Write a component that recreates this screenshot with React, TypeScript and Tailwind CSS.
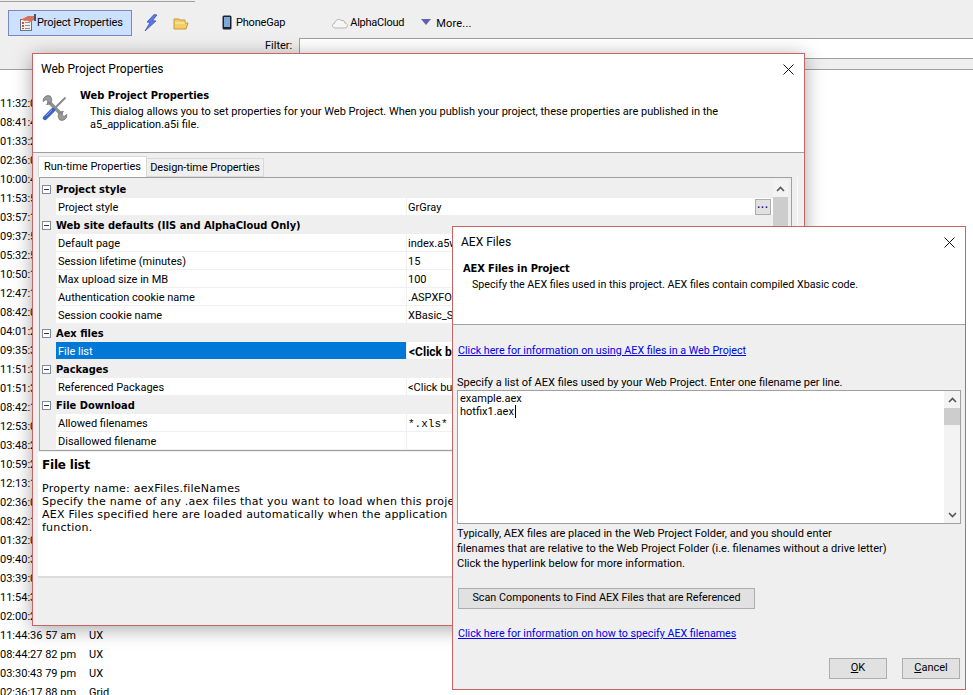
import React from "react";

const times = ["11:32:0","08:41:4","01:33:2","02:36:0","10:00:4","11:53:5","03:57:1","09:37:5","05:32:5","10:50:1","12:47:1","08:42:0","04:01:2","09:35:3","11:51:3","01:51:3","08:42:1","12:53:0","03:48:2","10:59:2","12:13:1","02:36:0","08:42:1","01:32:0","09:40:3","03:39:0","11:54:3","02:00:2"];
const tail: [string, string][] = [["11:44:36 57 am","UX"],["08:44:27 82 pm","UX"],["03:30:43 79 pm","UX"],["02:36:17 88 pm","Grid"]];

function Group({ label }: { label: string }) {
  return (
    <div className="flex h-[18px] items-center bg-[#efefef]">
      <div className="flex w-[16px] shrink-0 items-center pl-[2px]">
        <div className="relative h-[9px] w-[9px] border border-[#7f8a9c] bg-white">
          <div className="absolute left-[1px] top-[3px] h-px w-[5px] bg-[#334]" />
        </div>
      </div>
      <span className="pt-[2px] font-bold text-[11px] [font-family:'DejaVu_Sans',sans-serif] [font-stretch:condensed]">{label}</span>
    </div>
  );
}

function Row({ name, value, selected, mono, bold }: { name: string; value?: string; selected?: boolean; mono?: boolean; bold?: boolean }) {
  return (
    <div className="flex h-[18px] bg-[#efefef]">
      <div className="w-[16px] shrink-0" />
      <div className={`flex h-[17px] w-[350px] shrink-0 items-center pl-[2px] pt-[3px] ${selected ? "bg-[#0078d7] text-white" : "bg-white"}`}>{name}</div>
      <div className={`ml-px flex h-[17px] flex-1 items-center justify-between bg-white ${bold ? "pl-[2px] font-bold text-[12px]" : "pl-[1px]"} ${mono ? "[font-family:'Liberation_Mono',monospace]" : ""}`}>
        <span className="pt-[3px]">{value}</span>
        {value === "GrGray" && (
          <span className="mr-[2px] flex h-[16px] w-[16px] items-center justify-center border border-[#adadad] bg-[#e1e1e1] pb-[4px] text-[10px] font-bold leading-[8px] tracking-[1px] text-[#00008b]">...</span>
        )}
      </div>
    </div>
  );
}

function Close() {
  return (
    <svg width="11" height="11" viewBox="0 0 11 11" className="block">
      <path d="M0.5 0.5L10.5 10.5M10.5 0.5L0.5 10.5" stroke="#111" strokeWidth="1" />
    </svg>
  );
}

function Chevron({ down }: { down?: boolean }) {
  return (
    <svg width="9" height="6" viewBox="0 0 9 6" className="block">
      <path d={down ? "M1 1L4.5 4.5L8 1" : "M1 5L4.5 1.5L8 5"} fill="none" stroke="#555" strokeWidth="1.6" />
    </svg>
  );
}

function PropsIcon() {
  return (
    <svg width="18" height="18" viewBox="0 0 18 18" className="block">
      <rect x="1.5" y="5.5" width="11" height="11" fill="#f3eee6" stroke="#6b7383" />
      <rect x="3" y="8" width="2" height="2" fill="#c8553d" />
      <rect x="3" y="11" width="2" height="2" fill="#c8553d" />
      <rect x="3" y="14" width="2" height="1" fill="#6b7383" />
      <path d="M6 8.5H11M6 11.5H11M6 14.5H11" stroke="#8a93a3" />
      <path d="M3 5L9 2H15V6L11 8L8 6.5L6 7L3 6Z" fill="#d9705a" />
      <rect x="15" y="0" width="2" height="7" fill="#47536b" />
    </svg>
  );
}

function ToolsIcon() {
  return (
    <svg width="26" height="26" viewBox="0 0 26 26" className="block">
      <path d="M6 6L20 20" stroke="#8f8f8f" strokeWidth="3.6" />
      <path d="M8.5 1.2A5 5 0 0 0 1.2 6.5L4 4.5L6.5 7L4.6 9.6A5 5 0 0 0 9.8 4.5Z" fill="#9a9a9a" stroke="#666" strokeWidth="0.7" />
      <path d="M17.5 24.8A5 5 0 0 0 24.8 19.5L22 21.5L19.5 19L21.4 16.4A5 5 0 0 0 16.2 21.5Z" fill="#9a9a9a" stroke="#666" strokeWidth="0.7" />
      <path d="M12 14L23.5 2.5" stroke="#8a8a8a" strokeWidth="2" />
      <path d="M3 23L11 15" stroke="#3c62c8" strokeWidth="4.4" strokeLinecap="round" />
      <path d="M4 21L10 15" stroke="#86a3ea" strokeWidth="1" />
    </svg>
  );
}

export default function App() {
  return (
    <div className="relative h-[695px] w-[973px] overflow-hidden bg-white text-[11px] text-black [font-family:Roboto,sans-serif]">
      {/* main toolbar */}
      <div className="relative h-[70px] border-b border-[#a0a0a0] bg-[#efefef]">
        <div className="h-[2px] w-[195px] border-b border-[#a0a0a0]" />
        <div className="flex h-[36px] items-start pl-[8px] pt-[8px]">
          <div className="flex h-[26px] w-[124px] items-center border border-[#7b86c4] bg-[#cce0ff] pl-[10px]">
            <PropsIcon />
            <span className="tracking-[-0.12px]">Project Properties</span>
          </div>
          <svg width="14" height="18" viewBox="0 0 14 18" className="ml-[12px] mt-[4px] block">
            <path d="M10 0.5L3 8L6 8.5L1 17L12 7L8.5 6.5L13 1Z" fill="#5a78e6" stroke="#3a4aa8" strokeWidth="0.7" />
          </svg>
          <svg width="16" height="13" viewBox="0 0 16 13" className="ml-[15px] mt-[7px] block">
            <path d="M1 2H6L7 3H12V6H15L13 12H1Z" fill="#f3cd6a" stroke="#c79a35" />
            <path d="M2 6H12" stroke="#fff0b8" />
          </svg>
          <svg width="10" height="15" viewBox="0 0 10 15" className="ml-[33px] mt-[5px] block">
            <rect x="0.5" y="0.5" width="9" height="14" rx="1.5" fill="#1d2230" />
            <rect x="2" y="2" width="6" height="10" fill="#7fa7d8" />
          </svg>
          <span className="ml-[4px] mt-[5px] tracking-[-0.2px]">PhoneGap</span>
          <svg width="18" height="12" viewBox="0 0 18 12" className="ml-[46px] mt-[7px] block">
            <path d="M4 11C1 11 0.5 7 3.5 6.5C4 3 8 1 10 3.5C13 2.5 14 5 13.8 6C17 6 17.5 11 14 11Z" fill="#f6f6f6" stroke="#b5b5b5" />
          </svg>
          <span className="ml-px mt-[5px] tracking-[-0.25px]">AlphaCloud</span>
          <svg width="10" height="6" viewBox="0 0 10 6" className="ml-[17px] mt-[9px] block">
            <path d="M0 0H10L5 6Z" fill="#5d62b5" />
          </svg>
          <span className="ml-[5px] mt-[6px] tracking-[0.2px]">More...</span>
        </div>
        <div className="flex items-start pl-[265px]">
          <span>Filter:</span>
          <div className="ml-[7px] h-[21px] flex-1 border border-r-0 border-[#a0a0a0] bg-white" />
        </div>
      </div>

      {/* background list */}
      <div className="flex flex-col pt-[24px]">
        {times.map((t, i) => (
          <div key={i} className="h-[19px] leading-[19px]">{t}</div>
        ))}
        {tail.map(([t, k], i) => (
          <div key={i} className="flex h-[19px] leading-[19px]">
            <span className="w-[89px]">{t}</span>
            <span>{k}</span>
          </div>
        ))}
      </div>

      {/* Web Project Properties window */}
      <div className="absolute left-[32px] top-[53px] flex h-[573px] w-[773px] flex-col border border-[#c86464] bg-[#efefef] shadow-[0_3px_18px_rgba(0,0,0,0.35)]">
        <div className="h-[99px] shrink-0 border-b border-[#a0a0a0] bg-white">
          <div className="flex items-center justify-between pl-[8px] pr-[10px] pt-[6px] text-[12px]">
            <span>Web Project Properties</span>
            <Close />
          </div>
          <div className="flex pl-[9px] pt-[11px]">
            <div className="pt-[6px]"><ToolsIcon /></div>
            <div className="ml-[12px]">
              <div className="font-bold text-[11px] leading-[14px] [font-family:'DejaVu_Sans',sans-serif] [font-stretch:condensed]">Web Project Properties</div>
              <div className="ml-[10px] mt-[2px] w-[640px] text-[11px] leading-[13px]">This dialog allows you to set properties for your Web Project. When you publish your project, these properties are published in the a5_application.a5i file.</div>
            </div>
          </div>
        </div>
        <div className="flex h-[24px] shrink-0 items-end pl-[5px] pr-[4px]">
          <div className="flex h-[21px] w-[109px] items-center justify-center border border-b-0 border-[#d9d9d9] bg-white">Run-time Properties</div>
          <div className="flex h-[19px] w-[117px] items-center justify-center border border-l-0 border-[#d9d9d9] bg-[#efefef] pt-px tracking-[-0.1px]">Design-time Properties</div>
        </div>
        <div className="mr-[6px] shrink-0 border-r border-[#fafafa]">
          <div className="ml-[6px] mr-[5px] flex h-[274px] flex-col border border-[#a0a0a0] pt-[2px]">
            <div className="flex pr-[3px]">
              <div className="flex-1 overflow-hidden">
                <Group label="Project style" />
                <Row name="Project style" value="GrGray" />
                <Group label="Web site defaults (IIS and AlphaCloud Only)" />
                <Row name="Default page" value="index.a5w" />
                <Row name="Session lifetime (minutes)" value="15" />
                <Row name="Max upload size in MB" value="100" />
                <Row name="Authentication cookie name" value=".ASPXFORM" />
                <Row name="Session cookie name" value="XBasic_Se" />
                <Group label="Aex files" />
                <Row name="File list" value="<Click b" selected bold />
                <Group label="Packages" />
                <Row name="Referenced Packages" value="<Click bu" />
                <Group label="File Download" />
                <Row name="Allowed filenames" value="*.xls*" mono />
                <Row name="Disallowed filename" />
              </div>
              <div className="w-[15px] shrink-0">
                <div className="flex h-[17px] items-center justify-center bg-[#f3f3f3]"><Chevron /></div>
                <div className="h-[240px] bg-[#cdcdcd]" />
              </div>
            </div>
          </div>
        </div>
        <div className="mx-[5px] mt-[1px] h-[126px] shrink-0 border-b-2 border-[#dcdcdc] bg-white pl-[4px] pt-[6px] text-[11px] leading-[13px] tracking-[0.22px] [font-family:'DejaVu_Sans',sans-serif]">
          <div className="text-[12px] font-bold leading-[14px] tracking-[-0.2px]">File list</div>
          <div className="mt-[10px] w-[560px]">Property name: aexFiles.fileNames</div>
          <div className="whitespace-nowrap">Specify the name of any .aex files that you want to load when this project</div>
          <div className="whitespace-nowrap">AEX Files specified here are loaded automatically when the application is</div>
          <div>function.</div>
        </div>
      </div>

      {/* AEX Files window */}
      <div className="absolute left-[452px] top-[226px] flex h-[464px] w-[514px] flex-col border border-[#c86464] bg-[#efefef] text-[11px]">
        <div className="h-[98px] shrink-0 border-b border-[#a0a0a0] bg-white">
          <div className="flex items-center justify-between pl-[8px] pr-[10px] pt-[6px] text-[12px]">
            <span>AEX Files</span>
            <Close />
          </div>
          <div className="pl-[10px] pt-[11px]">
            <div className="font-bold text-[11px] leading-[14px] tracking-[-0.1px] [font-family:'DejaVu_Sans',sans-serif] [font-stretch:condensed]">AEX Files in Project</div>
            <div className="ml-[9px] mt-[2px] text-[10.7px] leading-[13px]">Specify the AEX files used in this project. AEX files contain compiled Xbasic code.</div>
          </div>
        </div>
        <div className="flex flex-1 flex-col px-[4px]">
          <a className="ml-px mt-[19px] text-[10.7px] leading-[14px] text-[#0000ee] underline">Click here for information on using AEX files in a Web Project</a>
          <div className="mt-[18px] leading-[14px]">Specify a list of AEX files used by your Web Project. Enter one filename per line.</div>
          <div className="flex h-[134px] shrink-0 border border-[#a0a0a0] bg-white">
            <div className="flex-1 pl-[2px] pt-px leading-[13px]">
              <div>example.aex</div>
              <div className="flex items-center">hotfix1.aex<span className="ml-px inline-block h-[13px] w-px bg-black" /></div>
            </div>
            <div className="flex w-[16px] shrink-0 flex-col bg-[#f3f3f3]">
              <div className="flex h-[17px] items-center justify-center"><Chevron /></div>
              <div className="h-[17px] bg-[#cdcdcd]" />
              <div className="flex-1" />
              <div className="flex h-[17px] items-center justify-center"><Chevron down /></div>
            </div>
          </div>
          <div className="mt-[2px] leading-[15px]">Typically, AEX files are placed in the Web Project Folder, and you should enter</div>
          <div className="leading-[15px]">filenames that are relative to the Web Project Folder (i.e. filenames without a drive letter)</div>
          <div className="leading-[15px]">Click the hyperlink below for more information.</div>
          <div className="ml-px mt-[17px] flex h-[21px] w-[297px] items-center justify-center border border-[#adadad] bg-[#e1e1e1] text-[10.8px]">Scan Components to Find AEX Files that are Referenced</div>
          <a className="ml-px mt-[18px] text-[10.7px] leading-[14px] text-[#0000ee] underline">Click here for information on how to specify AEX filenames</a>
          <div className="mt-[17px] flex justify-end gap-[15px] pr-px">
            <div className="flex h-[21px] w-[58px] items-center justify-center border border-[#adadad] bg-[#e1e1e1]"><span><span className="underline">O</span>K</span></div>
            <div className="flex h-[21px] w-[58px] items-center justify-center border border-[#adadad] bg-[#e1e1e1]"><span><span className="underline">C</span>ancel</span></div>
          </div>
        </div>
      </div>
    </div>
  );
}
